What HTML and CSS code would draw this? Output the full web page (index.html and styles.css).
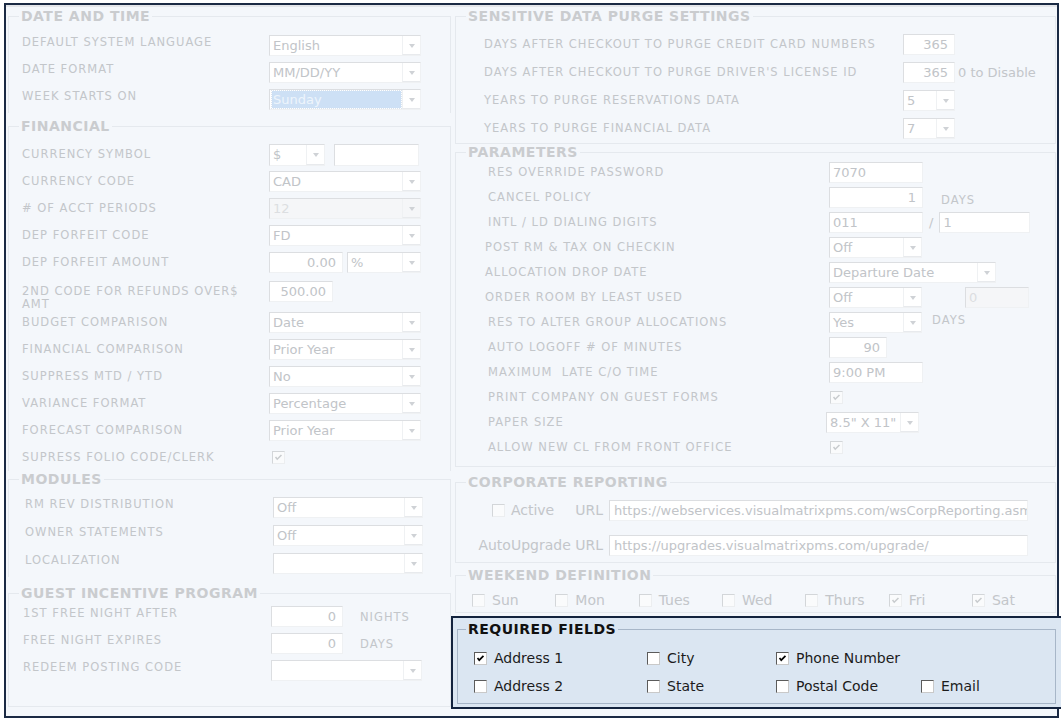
FILE: index.html
```html
<!DOCTYPE html>
<html>
<head>
<meta charset="utf-8">
<title>Settings</title>
<link rel="stylesheet" href="styles.css">
</head>
<body>
<div class="frame">
  <div class="col-left">
    <fieldset class="grp g-date open">
      <legend>DATE AND TIME</legend>
      <div class="row"><span class="lbl">DEFAULT SYSTEM LANGUAGE</span><span class="sel w152"><span class="val">English</span><span class="arr"></span></span></div>
      <div class="row"><span class="lbl">DATE FORMAT</span><span class="sel w152"><span class="val">MM/DD/YY</span><span class="arr"></span></span></div>
      <div class="row"><span class="lbl">WEEK STARTS ON</span><span class="sel w152 focus"><span class="val">Sunday</span><span class="arr"></span></span></div>
    </fieldset>

    <fieldset class="grp g-fin open">
      <legend>FINANCIAL</legend>
      <div class="row"><span class="lbl">CURRENCY SYMBOL</span><span class="sel w56 tall"><span class="val">$</span><span class="arr"></span></span><span class="inp w85 tall gap9"></span></div>
      <div class="row"><span class="lbl">CURRENCY CODE</span><span class="sel w152"><span class="val">CAD</span><span class="arr"></span></span></div>
      <div class="row"><span class="lbl"># OF ACCT PERIODS</span><span class="sel w152 off"><span class="val">12</span><span class="arr"></span></span></div>
      <div class="row"><span class="lbl">DEP FORFEIT CODE</span><span class="sel w152"><span class="val">FD</span><span class="arr"></span></span></div>
      <div class="row"><span class="lbl">DEP FORFEIT AMOUNT</span><span class="inp w74 r">0.00</span><span class="sel w74 gap4"><span class="val">%</span><span class="arr"></span></span></div>
      <div class="row two"><span class="lbl">2ND CODE FOR REFUNDS OVER$<br>AMT</span><span class="inp w64 r">500.00</span></div>
      <div class="row"><span class="lbl">BUDGET COMPARISON</span><span class="sel w152"><span class="val">Date</span><span class="arr"></span></span></div>
      <div class="row"><span class="lbl">FINANCIAL COMPARISON</span><span class="sel w152"><span class="val">Prior Year</span><span class="arr"></span></span></div>
      <div class="row"><span class="lbl">SUPPRESS MTD / YTD</span><span class="sel w152"><span class="val">No</span><span class="arr"></span></span></div>
      <div class="row"><span class="lbl">VARIANCE FORMAT</span><span class="sel w152"><span class="val">Percentage</span><span class="arr"></span></span></div>
      <div class="row"><span class="lbl">FORECAST COMPARISON</span><span class="sel w152"><span class="val">Prior Year</span><span class="arr"></span></span></div>
      <div class="row"><span class="lbl">SUPRESS FOLIO CODE/CLERK</span><span class="cb on nudge3"><svg viewBox="0 0 13 13"><polyline points="3,6 5,8.5 10,3.5"/></svg></span></div>
    </fieldset>

    <fieldset class="grp g-mod open">
      <legend>MODULES</legend>
      <div class="row"><span class="lbl">RM REV DISTRIBUTION</span><span class="sel w150"><span class="val">Off</span><span class="arr"></span></span></div>
      <div class="row"><span class="lbl">OWNER STATEMENTS</span><span class="sel w150"><span class="val">Off</span><span class="arr"></span></span></div>
      <div class="row"><span class="lbl">LOCALIZATION</span><span class="sel w150"><span class="val"></span><span class="arr"></span></span></div>
    </fieldset>

    <fieldset class="grp g-guest">
      <legend>GUEST INCENTIVE PROGRAM</legend>
      <div class="row"><span class="lbl">1ST FREE NIGHT AFTER</span><span class="inp w72 r">0</span><span class="unit u17">NIGHTS</span></div>
      <div class="row"><span class="lbl">FREE NIGHT EXPIRES</span><span class="inp w72 r">0</span><span class="unit u17">DAYS</span></div>
      <div class="row"><span class="lbl">REDEEM POSTING CODE</span><span class="sel w151"><span class="val"></span><span class="arr"></span></span></div>
    </fieldset>
  </div>

  <div class="col-right">
    <fieldset class="grp r-purge">
      <legend>SENSITIVE DATA PURGE SETTINGS</legend>
      <div class="row"><span class="lbl">DAYS AFTER CHECKOUT TO PURGE CREDIT CARD NUMBERS</span><span class="inp w52 r">365</span></div>
      <div class="row"><span class="lbl">DAYS AFTER CHECKOUT TO PURGE DRIVER'S LICENSE ID</span><span class="inp w52 r">365</span><span class="note">0 to Disable</span></div>
      <div class="row"><span class="lbl">YEARS TO PURGE RESERVATIONS DATA</span><span class="sel w52"><span class="val">5</span><span class="arr"></span></span></div>
      <div class="row"><span class="lbl">YEARS TO PURGE FINANCIAL DATA</span><span class="sel w52"><span class="val">7</span><span class="arr"></span></span></div>
    </fieldset>

    <fieldset class="grp r-param">
      <legend>PARAMETERS</legend>
      <div class="row"><span class="lbl">RES OVERRIDE PASSWORD</span><span class="inp w94">7070</span></div>
      <div class="row"><span class="lbl">CANCEL POLICY</span><span class="inp w94 r">1</span><span class="unit u18 low">DAYS</span></div>
      <div class="row"><span class="lbl">INTL / LD DIALING DIGITS</span><span class="inp w94">011</span><span class="slash">/</span><span class="inp w91">1</span></div>
      <div class="row"><span class="lbl out">POST RM &amp; TAX ON CHECKIN</span><span class="sel w93"><span class="val">Off</span><span class="arr"></span></span></div>
      <div class="row"><span class="lbl out">ALLOCATION DROP DATE</span><span class="sel w167"><span class="val">Departure Date</span><span class="arr"></span></span></div>
      <div class="row"><span class="lbl out">ORDER ROOM BY LEAST USED</span><span class="sel w93"><span class="val">Off</span><span class="arr"></span></span><span class="inp w64 off gap43">0</span></div>
      <div class="row"><span class="lbl">RES TO ALTER GROUP ALLOCATIONS</span><span class="sel w93"><span class="val">Yes</span><span class="arr"></span></span><span class="unit u10 high">DAYS</span></div>
      <div class="row"><span class="lbl">AUTO LOGOFF # OF MINUTES</span><span class="inp w58 r">90</span></div>
      <div class="row"><span class="lbl">MAXIMUM&nbsp; LATE C/O TIME</span><span class="inp w94">9:00 PM</span></div>
      <div class="row"><span class="lbl">PRINT COMPANY ON GUEST FORMS</span><span class="cb on nudge1"><svg viewBox="0 0 13 13"><polyline points="3,6 5,8.5 10,3.5"/></svg></span></div>
      <div class="row"><span class="lbl">PAPER SIZE</span><span class="sel w93 back3"><span class="val">8.5" X 11"</span><span class="arr"></span></span></div>
      <div class="row"><span class="lbl">ALLOW NEW CL FROM FRONT OFFICE</span><span class="cb on nudge1"><svg viewBox="0 0 13 13"><polyline points="3,6 5,8.5 10,3.5"/></svg></span></div>
    </fieldset>

    <fieldset class="grp r-corp">
      <legend>CORPORATE REPORTING</legend>
      <div class="crow">
        <span class="lead"><span class="cb"></span><span class="txt">Active</span><span class="txt url">URL</span></span>
        <span class="inp url-box">https://webservices.visualmatrixpms.com/wsCorpReporting.asmx</span>
      </div>
      <div class="crow second">
        <span class="lead"><span class="txt">AutoUpgrade URL</span></span>
        <span class="inp url-box">https://upgrades.visualmatrixpms.com/upgrade/</span>
      </div>
    </fieldset>

    <fieldset class="grp r-week">
      <legend>WEEKEND DEFINITION</legend>
      <div class="days">
        <span class="opt"><span class="cb"></span>Sun</span>
        <span class="opt"><span class="cb"></span>Mon</span>
        <span class="opt"><span class="cb"></span>Tues</span>
        <span class="opt"><span class="cb"></span>Wed</span>
        <span class="opt"><span class="cb"></span>Thurs</span>
        <span class="opt"><span class="cb on"><svg viewBox="0 0 13 13"><polyline points="3,6 5,8.5 10,3.5"/></svg></span>Fri</span>
        <span class="opt"><span class="cb on"><svg viewBox="0 0 13 13"><polyline points="3,6 5,8.5 10,3.5"/></svg></span>Sat</span>
      </div>
    </fieldset>

    <div class="highlight">
      <fieldset class="grp req">
        <legend>REQUIRED FIELDS</legend>
        <div class="req-grid">
          <span class="opt"><span class="cb on"><svg viewBox="0 0 13 13"><polyline points="3,6 5,8.5 10,3.5"/></svg></span>Address 1</span>
          <span class="opt"><span class="cb"></span>City</span>
          <span class="opt"><span class="cb on"><svg viewBox="0 0 13 13"><polyline points="3,6 5,8.5 10,3.5"/></svg></span>Phone Number</span>
          <span class="opt"></span>
          <span class="opt"><span class="cb"></span>Address 2</span>
          <span class="opt"><span class="cb"></span>State</span>
          <span class="opt"><span class="cb"></span>Postal Code</span>
          <span class="opt"><span class="cb"></span>Email</span>
        </div>
      </fieldset>
    </div>
  </div>
</div>
</body>
</html>
```

FILE: styles.css
```css
* { box-sizing: border-box; }

body {
  margin: 0;
  background: #ffffff;
  font-family: "DejaVu Sans", Verdana, sans-serif;
}

.frame {
  margin: 3px 0 0 4px;
  width: 1055px;
  height: 715px;
  border: 2px solid #1b2a44;
  background: #f4f7fb;
  box-shadow: inset 0 2px 0 #e4e6ea;
  display: flex;
}

.col-left {
  width: 445px;
  flex: none;
  padding: 3px 0 0 2px;
  display: flex;
  flex-direction: column;
}

.col-right {
  flex: 1;
  padding-top: 3px;
  display: flex;
  flex-direction: column;
}

/* group boxes */
.grp {
  margin: 0;
  padding: 0;
  min-width: 0;
  border: 1px solid #e5e9ee;
}
.grp.open { border-bottom: 0; }

.grp legend {
  margin-left: 10px;
  padding: 0 2px;
  font-size: 14px;
  font-weight: bold;
  line-height: 16px;
  letter-spacing: 0.5px;
  color: #cacccf;
}

.row {
  display: flex;
  align-items: center;
  height: 27px;
}

.lbl {
  flex: none;
  font-size: 11.5px;
  letter-spacing: 1px;
  line-height: 13px;
  color: #c3c6ca;
  white-space: nowrap;
}

/* left groups */
.g-date { padding-top: 8px; }
.g-date .row { padding-left: 13px; }
.g-date .lbl { width: 247px; padding-bottom: 6px; }

.g-fin { margin-top: 5px; padding-top: 7px; }
.g-fin .row { padding-left: 13px; }
.g-fin .lbl { width: 247px; }
.g-fin .row.two { height: 33px; align-items: flex-start; }
.g-fin .row.two .lbl { padding-top: 9px; }
.g-fin .row.two .inp { margin-top: 5px; }

.g-mod { padding-top: 6px; }
.g-mod .row { padding-left: 16px; height: 28px; }
.g-mod .lbl { width: 248px; padding-bottom: 6px; }

.g-guest { margin-top: 8px; padding-top: 2px; padding-bottom: 22px; }
.g-guest .row { padding-left: 14px; }
.g-guest .lbl { width: 248px; padding-bottom: 6px; }

/* right groups */
.col-right > .grp { margin-left: 4px; margin-right: 10px; }

.r-purge { padding-top: 6px; padding-bottom: 1px; }
.r-purge .row { height: 28px; padding-left: 28px; }
.r-purge .lbl { width: 419px; }

.r-param { padding-bottom: 6px; }
.r-param .row { height: 25px; padding-left: 32px; }
.r-param .lbl { width: 341px; }
.r-param .lbl.out { margin-left: -3px; width: 344px; }

.col-right > .r-corp { margin-top: 7px; padding-top: 7px; padding-bottom: 4px; }
.col-right > .r-week { margin-top: 4px; padding-top: 7px; padding-bottom: 2px; }

/* controls */
.sel, .inp {
  flex: none;
  height: 21px;
  border: 1px solid;
  border-color: #dcdee1 #eff1f3 #eff1f3 #dcdee1;
  background: #ffffff;
}
.sel { display: flex; }
.sel .val {
  flex: 1;
  padding-left: 3px;
  font-size: 13px;
  line-height: 19px;
  color: #c1c4c8;
  white-space: nowrap;
  overflow: hidden;
}
.sel .arr {
  width: 18px;
  flex: none;
  border-left: 1px solid #eff1f3;
  border-bottom: 1px solid #e8eaed;
  display: flex;
  align-items: center;
  justify-content: center;
}
.sel .arr::after {
  content: "";
  margin-top: 2px;
  border-left: 3.5px solid transparent;
  border-right: 3.5px solid transparent;
  border-top: 4px solid #cfd2d6;
}
.sel.focus .val {
  margin: 1px 1px 1px 2px;
  padding-left: 1px;
  line-height: 17px;
  background: #cde0f5;
  color: #eef5fc;
  outline: 1px dotted #d9e3ee;
}
.sel.off, .inp.off { background: #f5f6f8; }
.sel.off .val, .inp.off { color: #dcdee1; }

.inp {
  display: block;
  padding: 0 3px;
  font-size: 13px;
  line-height: 19px;
  color: #c1c4c8;
  white-space: nowrap;
  overflow: hidden;
}
.inp.r { text-align: right; padding-right: 6px; }

.tall { height: 22px; }
.gap9 { margin-left: 9px; }
.gap4 { margin-left: 4px; }
.gap43 { margin-left: 43px; }
.back3 { margin-left: -3px; }

.w52 { width: 52px; }
.w56 { width: 56px; }
.w58 { width: 58px; }
.w64 { width: 64px; }
.w72 { width: 72px; }
.w74 { width: 74px; }
.w85 { width: 85px; }
.w91 { width: 91px; }
.w93 { width: 93px; }
.w94 { width: 94px; }
.w150 { width: 150px; }
.w151 { width: 151px; }
.w152 { width: 152px; }
.w167 { width: 167px; }

.unit {
  font-size: 11.5px;
  letter-spacing: 1px;
  color: #c3c6ca;
}
.u17 { margin-left: 17px; }
.u18 { margin-left: 18px; }
.u10 { margin-left: 10px; }
.unit.low { padding-top: 4px; }
.unit.high { padding-bottom: 5px; }

.slash {
  margin: 0 6px 0 6px;
  font-size: 13px;
  color: #c3c6ca;
}

.note {
  margin-left: 3px;
  font-size: 13px;
  color: #c3c6ca;
}

/* checkboxes */
.cb {
  flex: none;
  display: inline-block;
  width: 13px;
  height: 13px;
  border: 1px solid;
  border-color: #d3d6d9 #eceef0 #eceef0 #d3d6d9;
  background: #fafbfc;
}
.cb svg { display: block; width: 11px; height: 11px; margin: 0; }
.cb svg polyline { fill: none; stroke: #c8cbce; stroke-width: 1.8; }
.nudge3 { margin-left: 3px; }
.nudge1 { margin-left: 1px; }

/* corporate reporting */
.crow {
  display: flex;
  align-items: center;
  height: 26px;
}
.crow.second { margin-top: 9px; }
.crow .lead {
  width: 153px;
  flex: none;
  padding-right: 6px;
  display: flex;
  align-items: center;
  justify-content: flex-end;
}
.crow .cb { margin-right: 6px; }
.crow .txt { font-size: 14px; color: #c3c6ca; white-space: nowrap; }
.crow .txt.url { margin-left: 21px; }
.url-box { width: 419px; font-size: 13px; padding-left: 4px; }

/* weekend */
.days {
  display: grid;
  grid-template-columns: repeat(7, 83.33px);
  padding-left: 16px;
  height: 20px;
  align-items: center;
}
.opt {
  display: flex;
  align-items: center;
  font-size: 14px;
  color: #c3c6ca;
  white-space: nowrap;
}
.opt .cb { margin-right: 7px; }

/* highlighted required fields */
.highlight {
  margin-top: 3px;
  border: 2px solid #13233e;
  background: #dbe6f2;
  padding: 3px 8px 3px 4px;
}
.req {
  border-color: #a7b6c8;
  padding: 7px 0 3px 0;
}
.req legend {
  color: #111111;
  margin-left: 8px;
}
.req-grid {
  display: grid;
  grid-template-columns: 173px 129px 145px 1fr;
  grid-auto-rows: 28px;
  padding-left: 16px;
  align-items: center;
}
.req .opt { color: #1c1c1c; }
.req .opt .cb {
  margin-right: 7px;
  background: #ffffff;
  border-color: #5b5b5b #c9c9c9 #c9c9c9 #5b5b5b;
}
.req .cb svg polyline { stroke: #000000; stroke-width: 2; }
```
